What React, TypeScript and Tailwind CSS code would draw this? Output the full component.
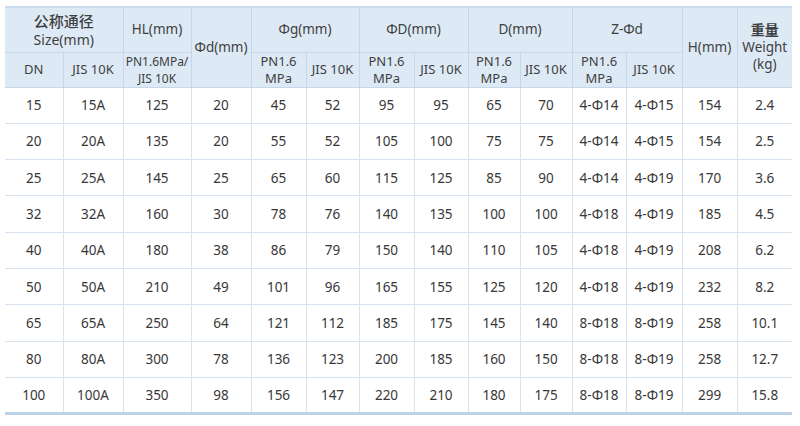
import React from 'react';

const rows: string[][] = [
  ['15', '15A', '125', '20', '45', '52', '95', '95', '65', '70', '4-Φ14', '4-Φ15', '154', '2.4'],
  ['20', '20A', '135', '20', '55', '52', '105', '100', '75', '75', '4-Φ14', '4-Φ15', '154', '2.5'],
  ['25', '25A', '145', '25', '65', '60', '115', '125', '85', '90', '4-Φ14', '4-Φ19', '170', '3.6'],
  ['32', '32A', '160', '30', '78', '76', '140', '135', '100', '100', '4-Φ18', '4-Φ19', '185', '4.5'],
  ['40', '40A', '180', '38', '86', '79', '150', '140', '110', '105', '4-Φ18', '4-Φ19', '208', '6.2'],
  ['50', '50A', '210', '49', '101', '96', '165', '155', '125', '120', '4-Φ18', '4-Φ19', '232', '8.2'],
  ['65', '65A', '250', '64', '121', '112', '185', '175', '145', '140', '8-Φ18', '8-Φ19', '258', '10.1'],
  ['80', '80A', '300', '78', '136', '123', '200', '185', '160', '150', '8-Φ18', '8-Φ19', '258', '12.7'],
  ['100', '100A', '350', '98', '156', '147', '220', '210', '180', '175', '8-Φ18', '8-Φ19', '299', '15.8'],
];

const widths = [58, 60, 68, 60, 55, 53, 55, 54, 52, 52, 54, 56, 55, 55];

const th = 'border border-[#c5d8eb] font-normal text-center align-middle leading-[17px] px-0';

export default function App() {
  return (
    <div className="w-[800px] h-[426px] bg-white pl-[5px] pt-[6px] font-['Noto_Sans','Noto_Sans_CJK_SC',sans-serif] text-[#383838]">
      <table className="table-fixed border-collapse w-[787px] border-t-2 border-t-[#cbdcee] border-b-[3px] border-b-[#bcd2e8]">
        <colgroup>
          {widths.map((w, i) => (
            <col key={i} style={{ width: w }} />
          ))}
        </colgroup>
        <thead className="bg-[#dde9f5] text-[13.5px] text-[#404040]">
          <tr className="h-[45px]">
            <th colSpan={2} className={`${th} border-l-0`}>
              <div className="text-[15px] font-medium leading-[19px]">公称通径</div>
              <div className="text-[14px] leading-[17px]">Size(mm)</div>
            </th>
            <th className={th}>HL(mm)</th>
            <th rowSpan={2} className={th}>Φd(mm)</th>
            <th colSpan={2} className={th}>Φg(mm)</th>
            <th colSpan={2} className={th}>ΦD(mm)</th>
            <th colSpan={2} className={th}>D(mm)</th>
            <th colSpan={2} className={th}>Z-Φd</th>
            <th rowSpan={2} className={th}>H(mm)</th>
            <th rowSpan={2} className={`${th} border-r-0`}>
              <div className="font-bold text-[14px] leading-[18px]">重量</div>
              <div>Weight</div>
              <div>(kg)</div>
            </th>
          </tr>
          <tr className="h-[35px] text-[13px]">
            <th className={`${th} border-l-0`}>DN</th>
            <th className={th}>JIS 10K</th>
            <th className={`${th} text-[12px] leading-[15px]`}>
              PN1.6MPa/
              <br />
              JIS 10K
            </th>
            <th className={th}>PN1.6<br />MPa</th>
            <th className={th}>JIS 10K</th>
            <th className={th}>PN1.6<br />MPa</th>
            <th className={th}>JIS 10K</th>
            <th className={th}>PN1.6<br />MPa</th>
            <th className={th}>JIS 10K</th>
            <th className={th}>PN1.6<br />MPa</th>
            <th className={th}>JIS 10K</th>
          </tr>
        </thead>
        <tbody className="text-[13.5px]">
          {rows.map((r, i) => (
            <tr key={i} className="h-[36.3px]">
              {r.map((c, j) => (
                <td
                  key={j}
                  className={`border border-[#d6e2ee] text-center align-middle p-0 ${j === 0 ? 'border-l-0' : ''} ${j === 13 ? 'border-r-0' : ''}`}
                >
                  {c}
                </td>
              ))}
            </tr>
          ))}
        </tbody>
      </table>
    </div>
  );
}
